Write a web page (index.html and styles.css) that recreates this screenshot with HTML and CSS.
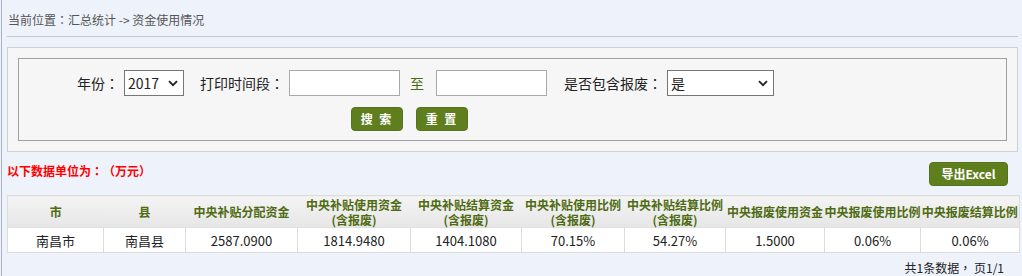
FILE: index.html
```html
<!DOCTYPE html>
<html lang="zh-CN">
<head>
<meta charset="utf-8">
<title>资金使用情况</title>
<link rel="stylesheet" href="styles.css">
</head>
<body>
<div class="main">
  <div class="crumb">当前位置<span class="p" lang="zh-TW">：</span>汇总统计 -&gt; 资金使用情况</div>

  <div class="panel">
    <div class="fieldset">
      <div class="row">
        <span class="label">年份<span class="p" lang="zh-TW">：</span></span>
        <div class="select sel-year"><span>2017</span><svg width="10" height="7" viewBox="0 0 10 7"><path d="M1 1.2 L5 5.2 L9 1.2" fill="none" stroke="#222" stroke-width="1.8"/></svg></div>
        <span class="label l-time">打印时间段<span class="p" lang="zh-TW">：</span></span>
        <div class="input"></div>
        <span class="to">至</span>
        <div class="input"></div>
        <span class="label l-scrap">是否包含报废<span class="p" lang="zh-TW">：</span></span>
        <div class="select sel-scrap"><span>是</span><svg width="10" height="7" viewBox="0 0 10 7"><path d="M1 1.2 L5 5.2 L9 1.2" fill="none" stroke="#222" stroke-width="1.8"/></svg></div>
      </div>
      <div class="btns">
        <button class="btn">搜 索</button>
        <button class="btn">重 置</button>
      </div>
    </div>
  </div>

  <div class="toolbar">
    <span class="unit">以下数据单位为<span class="p" lang="zh-TW">：（</span>万元<span class="p" lang="zh-TW">）</span></span>
    <button class="btn btn-export">导出Excel</button>
  </div>

  <table class="grid">
    <colgroup>
      <col style="width:96px"><col style="width:82px"><col style="width:112px"><col style="width:113px"><col style="width:111px"><col style="width:103px"><col style="width:101px"><col style="width:99px"><col style="width:96px"><col style="width:99px">
    </colgroup>
    <thead>
      <tr>
        <th>市</th>
        <th>县</th>
        <th>中央补贴分配资金</th>
        <th>中央补贴使用资金<br>(含报废)</th>
        <th>中央补贴结算资金<br>(含报废)</th>
        <th>中央补贴使用比例<br>(含报废)</th>
        <th>中央补贴结算比例<br>(含报废)</th>
        <th>中央报废使用资金</th>
        <th>中央报废使用比例</th>
        <th>中央报废结算比例</th>
      </tr>
    </thead>
    <tbody>
      <tr>
        <td>南昌市</td>
        <td>南昌县</td>
        <td>2587.0900</td>
        <td>1814.9480</td>
        <td>1404.1080</td>
        <td>70.15%</td>
        <td>54.27%</td>
        <td>1.5000</td>
        <td>0.06%</td>
        <td>0.06%</td>
      </tr>
    </tbody>
  </table>

  <div class="pager">共1条数据<span class="p" lang="zh-TW">，</span> 页1/1</div>
</div>
</body>
</html>
```

FILE: styles.css
```css
html, body {
  margin: 0;
  padding: 0;
  background: #eef2fb;
}
body {
  padding-left: 1px;
  font-family: "Noto Sans CJK SC", "Microsoft YaHei", sans-serif;
  color: #222;
  text-spacing-trim: space-all;
}
.p {
  font-family: "Noto Sans CJK TC", "Noto Sans CJK SC", sans-serif;
}
.main {
  border-left: 1px solid #a9b1c2;
  min-height: 276px;
  box-sizing: border-box;
  padding: 0 3px 0 5px;
}
.crumb {
  font-size: 12px;
  line-height: 16px;
  color: #555;
  padding: 12px 0 8px 1px;
  border-bottom: 1px solid #c8c8c8;
  margin-right: 1px;
}
.panel {
  margin-top: 10px;
  border: 1px solid #cfcfcf;
  background: #f6f6f6;
  padding: 10px;
  margin-right: 1px;
}
.fieldset {
  border: 1px solid #a0a0a0;
  padding: 11px 0 9px 58px;
}
.row {
  display: flex;
  align-items: center;
  height: 26px;
  font-size: 14px;
}
.label {
  color: #222;
  margin-right: 5px;
  line-height: 26px;
}
.l-time { margin-left: 16px; }
.l-scrap { margin-left: 17px; }
.select {
  box-sizing: border-box;
  height: 26px;
  border: 1px solid #767676;
  background: #fff;
  display: flex;
  align-items: center;
  justify-content: space-between;
  padding: 0 5px 0 3px;
  font-size: 14px;
}
.sel-year { width: 60px; }
.sel-scrap { width: 107px; }
.input {
  box-sizing: border-box;
  width: 111px;
  height: 26px;
  border: 1px solid #a9a9a9;
  background: #fff;
}
.to {
  color: #4b6b10;
  margin: 0 12px 0 10px;
}
.btns {
  display: flex;
  gap: 13px;
  margin-top: 11px;
  padding-left: 274px;
}
.btn {
  font-family: "Noto Sans CJK SC", "Microsoft YaHei", sans-serif;
  height: 24px;
  width: 52px;
  padding: 0;
  border: 1px solid #55731a;
  border-radius: 4px;
  background: #5f7f1f;
  color: #fff;
  font-size: 12px;
  font-weight: bold;
  letter-spacing: 2px;
  line-height: 22px;
}
.toolbar {
  display: flex;
  justify-content: space-between;
  align-items: flex-start;
  margin-top: 10px;
  margin-bottom: 9px;
}
.unit {
  color: #f00;
  font-size: 12px;
  font-weight: bold;
  line-height: 16px;
  margin-top: 1px;
}
.btn-export {
  width: 79px;
  letter-spacing: 0;
  margin-right: 11px;
}
.grid {
  width: 1012px;
  border-collapse: collapse;
  table-layout: fixed;
  border: 1px solid #dcdcdc;
}
.grid th {
  height: 31px;
  padding: 0;
  font-size: 12px;
  font-weight: bold;
  line-height: 15px;
  color: #4f6b12;
  background: linear-gradient(#f4f4f4, #e6e6e6);
  border-bottom: 1px solid #e0e0e0;
  white-space: nowrap;
  text-align: center;
}
.grid td {
  height: 24px;
  padding: 0;
  font-size: 13px;
  text-align: center;
  background: #fff;
  border: 1px solid #dcdcdc;
  color: #222;
}
.pager {
  text-align: right;
  font-size: 12px;
  line-height: 16px;
  margin-top: 7px;
  padding-right: 15px;
  color: #222;
}
```
